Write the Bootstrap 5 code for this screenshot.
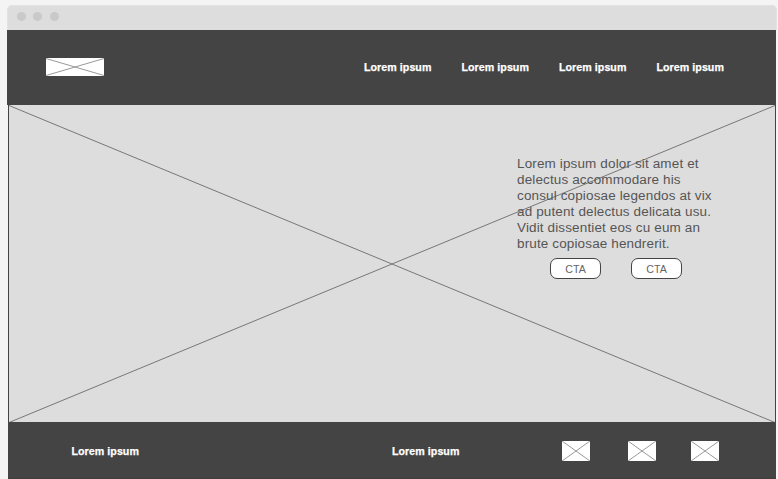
<!DOCTYPE html>
<html lang="en">
<head>
<meta charset="utf-8">
<meta name="viewport" content="width=device-width, initial-scale=1">
<title>Wireframe</title>
<link href="https://cdn.jsdelivr.net/npm/bootstrap@5.3.0/dist/css/bootstrap.min.css" rel="stylesheet">
<style>
body{background:#f4f4f4;font-family:"Liberation Sans",Arial,sans-serif;height:479px;color:#555}
.window{width:770px;height:474px;margin:5px 0 0 7px}
.titlebar{height:25px;background:#ddd;border:1px solid #e2e2e2;border-bottom:0;border-radius:5px 5px 0 0;padding:0 0 3px 9px}
.dot{width:9px;height:9px;background:#c9c9c9}
.dot-a{margin-right:7px}
.dot-b{margin-right:8px}
.site-head{height:75px;width:769px;background:#444;padding:0 52px 1px 39px}
.site-head .nav-link,.foot-label{color:#fff;font-size:10.67px;line-height:16px;font-weight:700;letter-spacing:.05px;-webkit-text-stroke:.25px #fff;padding:0;width:67.5px;white-space:nowrap}
.menu{gap:30px}
.hero{height:317px;width:768px;margin-left:1px;background:#ddd;border:solid #444;border-width:0 1px}
.copy{width:204px;margin-left:508px;padding-top:51px}
.copy p{font-size:13.49px;letter-spacing:.14px;line-height:16px;white-space:nowrap}
.actions{gap:30px;margin:6px 0 0 33px}
.cta{width:51px;height:21px;padding:1px 0 0;font-size:10.67px;line-height:18px;border:1px solid #444;border-radius:7px;background:#fff;color:#666}
.site-foot{height:57px;width:768px;margin-left:1px;background:#444;border-bottom:1px solid #403e3f}
.foot-label{margin-top:21px}
.foot-a{margin-left:63.5px}
.foot-b{margin-left:253px}
.socials{margin:19px 0 0 102px}
.box{display:block;background:#fff;stroke:#999;stroke-width:1}
</style>
<script src="https://cdn.jsdelivr.net/npm/bootstrap@5.3.0/dist/js/bootstrap.bundle.min.js"></script>
</head>
<body class="overflow-hidden">
<div class="window">
  <div class="titlebar d-flex align-items-center">
    <span class="dot dot-a rounded-circle"></span><span class="dot dot-b rounded-circle"></span><span class="dot rounded-circle"></span>
  </div>
  <header class="site-head d-flex align-items-center justify-content-between">
    <svg class="box" width="58" height="18"><path d="M0 .5 58 17.5M0 17.5 58 .5"/></svg>
    <nav class="nav menu flex-nowrap">
      <a class="nav-link" href="#">Lorem ipsum</a>
      <a class="nav-link" href="#">Lorem ipsum</a>
      <a class="nav-link" href="#">Lorem ipsum</a>
      <a class="nav-link" href="#">Lorem ipsum</a>
    </nav>
  </header>
  <main class="hero position-relative">
    <svg class="position-absolute top-0 start-0" width="766" height="317" fill="none" stroke="#777"><path d="M0 0.5 766 317.5M0 317.5 766 0.5"/></svg>
    <div class="copy position-relative">
      <p class="mb-0">Lorem ipsum dolor sit amet et<br>delectus accommodare his<br>consul copiosae legendos at vix<br>ad putent delectus delicata usu.<br>Vidit dissentiet eos cu eum an<br>brute copiosae hendrerit.</p>
      <div class="actions d-flex">
        <button type="button" class="btn cta">CTA</button>
        <button type="button" class="btn cta">CTA</button>
      </div>
    </div>
  </main>
  <footer class="site-foot d-flex align-items-start">
    <span class="foot-label foot-a">Lorem ipsum</span>
    <span class="foot-label foot-b">Lorem ipsum</span>
    <div class="socials d-flex">
      <svg class="box" width="28" height="20"><path d="M0 0 28 20M0 20 28 0"/></svg>
      <svg class="box" width="28" height="20" style="margin-left:38px"><path d="M0 0 28 20M0 20 28 0"/></svg>
      <svg class="box" width="28" height="20" style="margin-left:35px"><path d="M0 0 28 20M0 20 28 0"/></svg>
    </div>
  </footer>
</div>
</body>
</html>
